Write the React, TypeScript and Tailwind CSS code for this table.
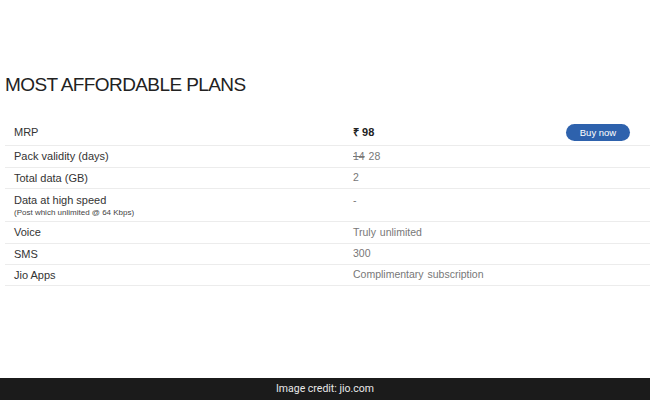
const ROWS: { label: string; note?: string; value: React.ReactNode; h: string }[] = [
  {
    label: 'Pack validity (days)',
    value: (
      <>
        <span className="line-through">14</span> 28
      </>
    ),
    h: 'h-[22px]',
  },
  { label: 'Total data (GB)', value: '2', h: 'h-[21px]' },
  { label: 'Data at high speed', note: '(Post which unlimited @ 64 Kbps)', value: '-', h: 'h-[33px]' },
  { label: 'Voice', value: 'Truly unlimited', h: 'h-[22px]' },
  { label: 'SMS', value: '300', h: 'h-[21px]' },
  { label: 'Jio Apps', value: 'Complimentary subscription', h: 'h-[21px]' },
];

function PlanRow({ label, note, value, h }: (typeof ROWS)[number]) {
  if (note) {
    return (
      <div className={`flex ${h} border-b border-[#ececec] pt-[5px]`}>
        <div className="w-[348px] pl-[9px]">
          <p className="text-[11px] leading-[13px] text-[#333]">{label}</p>
          <p className="mt-[1px] text-[8px] leading-[10px] text-[#444]">{note}</p>
        </div>
        <p className="text-[10.5px] leading-[13px] text-[#777] [word-spacing:1px]">{value}</p>
      </div>
    );
  }
  return (
    <div className={`flex ${h} items-center border-b border-[#ececec]`}>
      <p className="w-[348px] pl-[9px] text-[11px] text-[#333]">{label}</p>
      <p className="text-[10.5px] text-[#777] [word-spacing:1px]">{value}</p>
    </div>
  );
}

export default function App() {
  return (
    <div className="flex h-[400px] w-[650px] flex-col bg-white font-['Liberation_Sans',Arial,sans-serif]">
      <div className="pl-[5px] pt-[75px]">
        <h1 className="text-[19px] leading-[20px] tracking-[-0.6px] text-[#222]">
          MOST AFFORDABLE PLANS
        </h1>

        <div className="mt-[24px]">
          <div className="flex h-[27px] items-center border-b border-[#ececec]">
            <p className="w-[348px] pl-[9px] text-[11px] text-[#333]">MRP</p>
            <p className="text-[11px] font-bold text-[#222]">₹ 98</p>
            <div className="flex flex-1 justify-end pr-[20px]">
              <button
                type="button"
                className="h-[17px] w-[64px] rounded-full bg-[#2e62ad] text-[9.5px] leading-[17px] text-white"
              >
                Buy now
              </button>
            </div>
          </div>
          {ROWS.map((row) => (
            <PlanRow key={row.label} {...row} />
          ))}
        </div>
      </div>

      <div className="mt-auto flex h-[22px] items-center justify-center bg-[#1b1b1b] font-['Roboto',sans-serif] text-[10.5px] text-[#e8e8e8]">
        Image credit: jio.com
      </div>
    </div>
  );
}
